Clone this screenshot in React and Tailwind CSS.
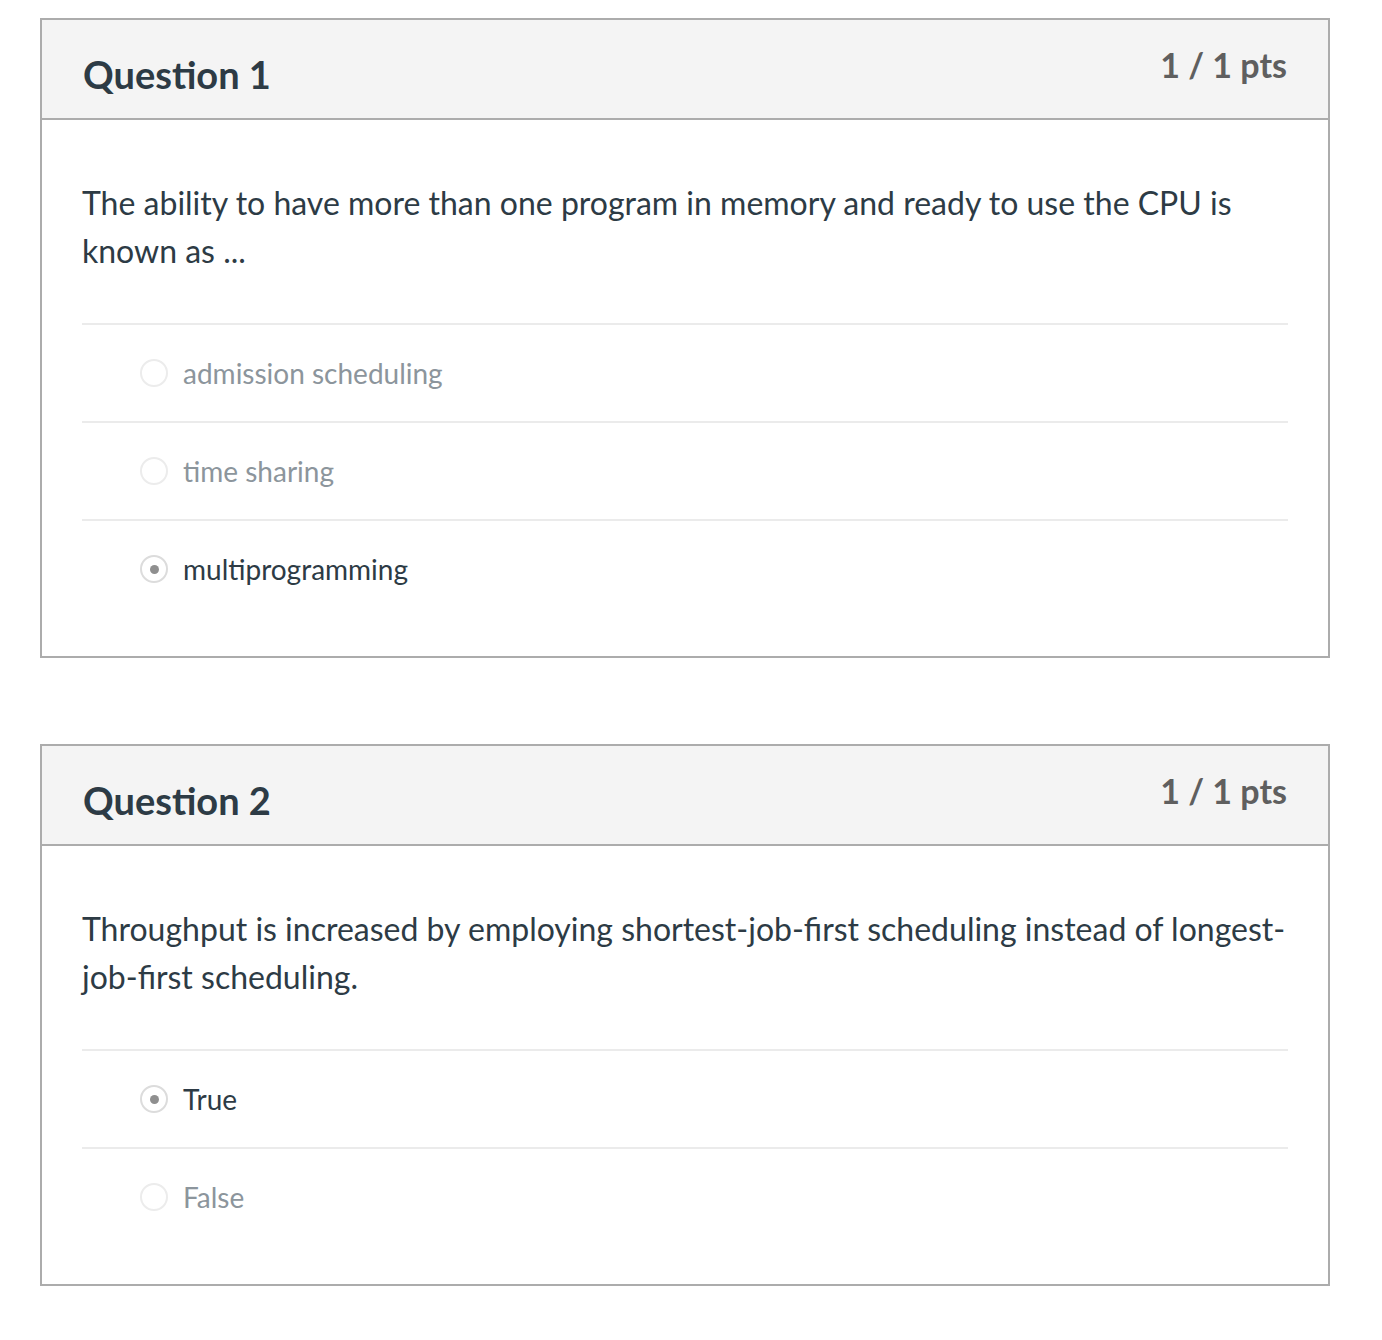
import React from 'react';

const questions = [
  {
    title: 'Question 1',
    points: '1 / 1 pts',
    text: 'The ability to have more than one program in memory and ready to use the CPU is known as ...',
    answers: [
      { label: 'admission scheduling', selected: false },
      { label: 'time sharing', selected: false },
      { label: 'multiprogramming', selected: true },
    ],
  },
  {
    title: 'Question 2',
    points: '1 / 1 pts',
    text: 'Throughput is increased by employing shortest-job-first scheduling instead of longest-job-first scheduling.',
    answers: [
      { label: 'True', selected: true },
      { label: 'False', selected: false },
    ],
  },
];

const Radio = ({ selected }) => (
  <span
    className={`flex h-[28px] w-[28px] shrink-0 items-center justify-center rounded-full border-2 bg-white ${
      selected ? 'border-[#dcdcdc]' : 'border-[#ececec]'
    }`}
  >
    {selected && <span className="h-[9px] w-[9px] rounded-full bg-[#8f8f8f]" />}
  </span>
);

const App = () => {
  return (
    <div
      className="min-h-[1340px] bg-white pl-[40px] pt-[18px]"
      style={{ fontFamily: 'Lato, "Open Sans", sans-serif' }}
    >
      <div className="flex w-[1290px] flex-col gap-[86px]">
        {questions.map((q) => (
          <div key={q.title} className="border-2 border-[#acacac]">
            {/* Header */}
            <div className="flex h-[100px] items-start justify-between border-b-2 border-[#acacac] bg-[#f4f4f4] px-[41px]">
              <h3 className="pt-[30px] text-[38px] font-bold leading-[48px] text-[#2d3b45]">{q.title}</h3>
              <span className="pt-[23px] text-[34px] font-bold leading-[44px] text-[#5f5f5f]">{q.points}</span>
            </div>

            {/* Body */}
            <div className="px-[40px] pb-[39px] pt-[59px]">
              <p className="text-[32px] leading-[48px] text-[#2d3b45]">{q.text}</p>
              <div className="mt-[48px]">
                {q.answers.map((a) => (
                  <div
                    key={a.label}
                    className="flex h-[98px] items-center gap-[15px] border-t-2 border-[#ebebeb] pl-[58px]"
                  >
                    <Radio selected={a.selected} />
                    <span
                      className={`text-[28px] leading-[36px] ${
                        a.selected ? 'text-[#2d3b45]' : 'text-[#8c959c]'
                      }`}
                    >
                      {a.label}
                    </span>
                  </div>
                ))}
              </div>
            </div>
          </div>
        ))}
      </div>
    </div>
  );
};

export default App;
